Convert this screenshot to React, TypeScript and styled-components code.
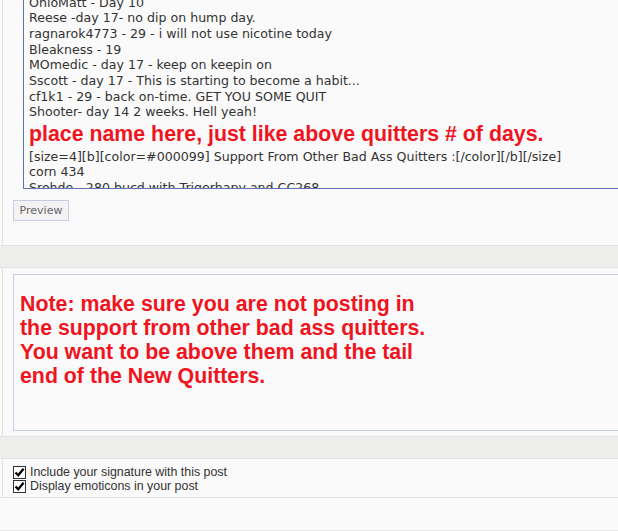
import styled, { createGlobalStyle } from 'styled-components';

const GlobalStyle = createGlobalStyle`
	html, body {
		margin: 0;
		padding: 0;
		background: #fafafa;
		overflow: hidden;
	}
`;

const editorLines = [
	'OhioMatt - Day 10',
	'Reese -day 17- no dip on hump day.',
	'ragnarok4773 - 29 - i will not use nicotine today',
	'Bleakness - 19',
	'MOmedic - day 17 - keep on keepin on',
	'Sscott - day 17 - This is starting to become a habit...',
	'cf1k1 - 29 - back on-time. GET YOU SOME QUIT',
	'Shooter- day 14 2 weeks. Hell yeah!',
];

const afterLines = [
	'[size=4][b][color=#000099] Support From Other Bad Ass Quitters :[/color][/b][/size]',
	'corn 434',
	'Srohde - 280 bucd with Trigerhapy and CC268',
];

const noteLines = [
	'Note: make sure you are not posting in',
	'the support from other bad ass quitters.',
	'You want to be above them and the tail',
	'end of the New Quitters.',
];

const options = ['Include your signature with this post', 'Display emoticons in your post'];

export default function App() {
	return (
		<Page>
			<GlobalStyle />

			<Row>
				<Cell>
					<MessageBox>
						<Scrolled>
							{editorLines.map((line) => (
								<Line key={line}>{line}</Line>
							))}
							<RedLine>place name here, just like above quitters # of days.</RedLine>
							{afterLines.map((line) => (
								<Line key={line}>{line}</Line>
							))}
						</Scrolled>
					</MessageBox>
					<PreviewButton type='button'>Preview</PreviewButton>
				</Cell>
			</Row>

			<Band />

			<Row>
				<Cell $padTop={6} $padBottom={5}>
					<NoteBox>
						{noteLines.map((line) => (
							<NoteLine key={line}>{line}</NoteLine>
						))}
					</NoteBox>
				</Cell>
			</Row>

			<Band />

			<Row>
				<Cell $padTop={6} $padBottom={4}>
					{options.map((label) => (
						<Option key={label}>
							<CheckBox>
								<svg width='11' height='11' viewBox='0 0 11 11'>
									<path
										d='M1.5 5.5 L4.2 8.3 L9.6 1.8'
										fill='none'
										stroke='#000'
										strokeWidth='2.3'
									/>
								</svg>
							</CheckBox>
							{label}
						</Option>
					))}
				</Cell>
			</Row>

			<Footer />
		</Page>
	);
}

const Page = styled.div`
	width: 618px;
	height: 531px;
	overflow: hidden;
	background: #fafafa;
`;

const Row = styled.div`
	border-bottom: 1px solid #e3e3e3;
	padding-left: 2px;
`;

interface CellProps {
	$padTop?: number;
	$padBottom?: number;
}

const Cell = styled.div<CellProps>`
	border-left: 1px solid #e3e3e3;
	padding: ${(p) => p.$padTop ?? 0}px 0 ${(p) => p.$padBottom ?? 24}px 10px;
	display: flex;
	flex-direction: column;
	align-items: flex-start;
`;

const MessageBox = styled.div`
	width: 640px;
	height: 188px;
	margin-left: 10px;
	border-left: 1px solid #6072b6;
	border-bottom: 1px solid #6072b6;
	overflow: hidden;
	padding-left: 5px;
	font-family: 'DejaVu Sans', Tahoma, sans-serif;
	font-size: 12.6px;
	color: #333;
`;

const Scrolled = styled.div`
	margin-top: -5.5px;
`;

const Line = styled.div`
	line-height: 15.7px;
	white-space: nowrap;
`;

const RedLine = styled.div`
	font-family: 'Liberation Sans', Arial, sans-serif;
	font-weight: bold;
	font-size: 21.33px;
	line-height: 28.6px;
	color: #f0141e;
	white-space: nowrap;
`;

const PreviewButton = styled.button`
	margin-top: 11px;
	height: 21px;
	width: 56px;
	padding: 0;
	border: 1px solid #c5cde3;
	background: #f3f3f3;
	color: #666;
	font-family: 'DejaVu Sans', Tahoma, sans-serif;
	font-size: 11px;
	line-height: 19px;
`;

const Band = styled.div`
	height: 21px;
	background: #eeeeec;
	border-bottom: 1px solid #e3e3e3;
`;

const NoteBox = styled.div`
	width: 640px;
	height: 155px;
	border: 1px solid #c4cde3;
	border-right: none;
	padding: 17px 0 0 6px;
	box-sizing: border-box;
	height: 157px;
`;

const NoteLine = styled.div`
	font-family: 'Liberation Sans', Arial, sans-serif;
	font-weight: bold;
	font-size: 21.33px;
	line-height: 24px;
	color: #f0141e;
	white-space: nowrap;
`;

const Option = styled.label`
	display: flex;
	align-items: center;
	gap: 4px;
	height: 14px;
	font-family: 'Liberation Sans', Arial, sans-serif;
	font-size: 12.4px;
	color: #333;
	white-space: nowrap;
`;

const CheckBox = styled.span`
	width: 11px;
	height: 11px;
	border: 1px solid #333;
	background: #fff;
	display: grid;
	place-content: center;
`;

const Footer = styled.div`
	height: 32px;
	border-bottom: 1px solid #e3e3e3;
`;
